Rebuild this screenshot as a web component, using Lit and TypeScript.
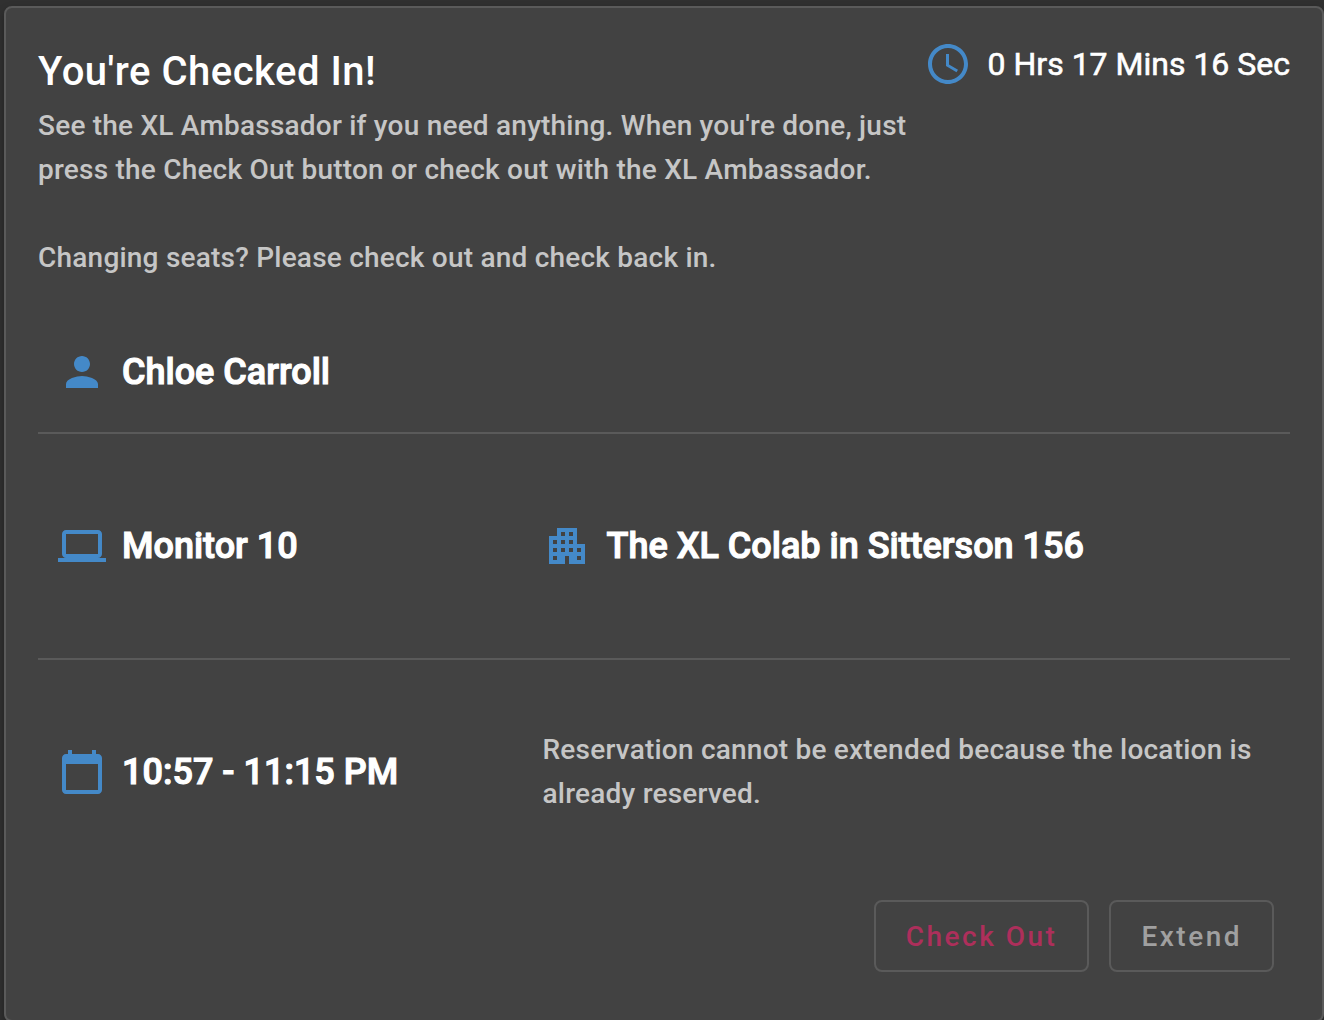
import { LitElement, html, css, svg } from "lit";
import { customElement } from "lit/decorators.js";

const ICONS = {
  clock: svg`<path d="M11.99 2C6.47 2 2 6.48 2 12s4.47 10 9.99 10C17.52 22 22 17.52 22 12S17.52 2 11.99 2zM12 20c-4.42 0-8-3.58-8-8s3.58-8 8-8 8 3.58 8 8-3.58 8-8 8z"/><path d="M12.5 7H11v6l5.25 3.15.75-1.23-4.5-2.67z"/>`,
  person: svg`<path d="M12 12c2.21 0 4-1.79 4-4s-1.79-4-4-4-4 1.79-4 4 1.79 4 4 4zm0 2c-2.67 0-8 1.34-8 4v2h16v-2c0-2.66-5.33-4-8-4z"/>`,
  laptop: svg`<path d="M20 18c1.1 0 1.99-.9 1.99-2L22 6c0-1.1-.9-2-2-2H4c-1.1 0-2 .9-2 2v10c0 1.1.9 2 2 2H0v2h24v-2h-4zM4 6h16v10H4V6z"/>`,
  building: svg`<path d="M17 11V3H7v4H3v14h8v-4h2v4h8V11h-4zM7 19H5v-2h2v2zm0-4H5v-2h2v2zm0-4H5V9h2v2zm4 4H9v-2h2v2zm0-4H9V9h2v2zm0-4H9V5h2v2zm4 8h-2v-2h2v2zm0-4h-2V9h2v2zm0-4h-2V5h2v2zm4 12h-2v-2h2v2zm0-4h-2v-2h2v2z"/>`,
  calendar: svg`<path d="M20 3h-1V1h-2v2H7V1H5v2H4c-1.1 0-2 .9-2 2v16c0 1.1.9 2 2 2h16c1.1 0 2-.9 2-2V5c0-1.1-.9-2-2-2zm0 18H4V8h16v13z"/>`,
};

const icon = (name: keyof typeof ICONS) =>
  html`<svg class="icon" viewBox="0 0 24 24" aria-hidden="true">${ICONS[name]}</svg>`;

@customElement("app-root")
export class AppRoot extends LitElement {
  static styles = css`
    :host {
      display: block;
      box-sizing: border-box;
      height: 1020px;
      overflow: hidden;
      padding: 6px 0 0 4px;
      background: #303030;
      color: #fff;
      font-family: Roboto, sans-serif;
    }
    .card {
      box-sizing: border-box;
      height: 1016px;
      padding: 32px;
      border: 2px solid #5a5a5a;
      border-radius: 8px;
      background: #424242;
      box-shadow: 0 4px 8px rgba(0, 0, 0, 0.3);
    }
    .header {
      display: flex;
      justify-content: space-between;
      height: 272px;
    }
    .intro {
      width: 880px;
    }
    .title {
      margin: 0;
      font-size: 40px;
      line-height: 64px;
      font-weight: 500;
      letter-spacing: 0.5px;
    }
    .text {
      margin: 0;
      color: #c6c6c6;
      font-size: 28px;
      line-height: 44px;
      font-weight: 500;
      letter-spacing: 0.215px;
      white-space: pre-line;
    }
    .timer {
      display: flex;
      gap: 16px;
      height: 48px;
      align-items: center;
      white-space: nowrap;
      font-size: 32px;
      -webkit-text-stroke: 0.6px #fff;
    }
    .icon {
      flex: none;
      width: 48px;
      height: 48px;
      fill: #4489c8;
    }
    .row {
      display: flex;
      align-items: center;
      box-sizing: border-box;
      height: 226px;
      padding-left: 20px;
      border-bottom: 2px solid #5a5a5a;
    }
    .person {
      height: 122px;
    }
    .last {
      border-bottom: none;
      height: 224px;
    }
    .cell {
      display: flex;
      align-items: center;
      gap: 16px;
      width: 484.5px;
      white-space: nowrap;
      font-size: 36px;
      font-weight: 500;
      -webkit-text-stroke: 1.1px #fff;
    }
    .actions {
      display: flex;
      justify-content: flex-end;
      gap: 20px;
      padding: 16px 16px 0 0;
    }
    .button {
      box-sizing: border-box;
      height: 72px;
      padding: 2px 30px 0;
      border: 2px solid #5a5a5a;
      border-radius: 8px;
      background: transparent;
      color: #a0a0a0;
      font: 500 28px/66px Roboto, sans-serif;
      letter-spacing: 2.5px;
    }
    .danger {
      color: #ad2f5b;
    }
  `;

  render() {
    return html`
      <main class="card">
        <header class="header">
          <div class="intro">
            <h1 class="title">You're Checked In!</h1>
            <p class="text">${"See the XL Ambassador if you need anything. When you're done, just\npress the Check Out button or check out with the XL Ambassador.\n\nChanging seats? Please check out and check back in."}</p>
          </div>
          <div class="timer">${icon("clock")}<span class="time">0 Hrs 17 Mins 16 Sec</span></div>
        </header>
        <section class="row person">
          <div class="cell">${icon("person")}<span class="name">Chloe Carroll</span></div>
        </section>
        <section class="row">
          <div class="cell">${icon("laptop")}<span class="seat">Monitor 10</span></div>
          <div class="cell">${icon("building")}<span class="place">The XL Colab in Sitterson 156</span></div>
        </section>
        <section class="row last">
          <div class="cell">${icon("calendar")}<span class="slot">10:57 - 11:15 PM</span></div>
          <p class="text">${"Reservation cannot be extended because the location is\nalready reserved."}</p>
        </section>
        <footer class="actions">
          <button class="button danger">Check Out</button>
          <button class="button">Extend</button>
        </footer>
      </main>
    `;
  }
}
